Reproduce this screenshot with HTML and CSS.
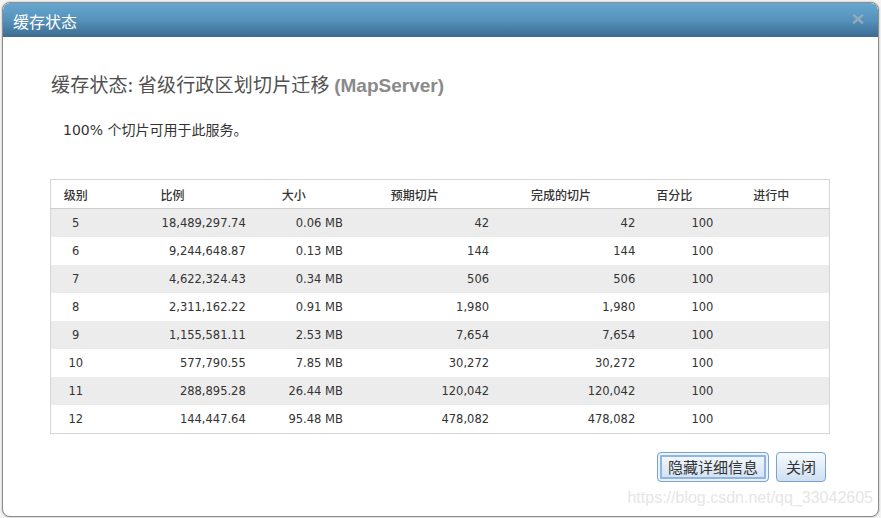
FILE: index.html
```html
<!DOCTYPE html>
<html lang="zh-CN">
<head>
<meta charset="utf-8">
<title>缓存状态</title>
<link rel="stylesheet" href="styles.css">
</head>
<body>
<div class="dialog">
  <div class="titlebar">
    <span class="title">缓存状态</span>
    <span class="close"><svg width="12" height="10" viewBox="0 0 12 10"><path d="M2 1.5 L10 8.5 M10 1.5 L2 8.5" stroke="#93a9bd" stroke-width="2.4" stroke-linecap="square"/></svg></span>
  </div>
  <div class="content">
    <h1 class="heading">缓存状态: 省级行政区划切片迁移 <span class="svc">(MapServer)</span></h1>
    <p class="msg">100% 个切片可用于此服务。</p>
    <table class="grid">
      <colgroup>
        <col class="w1"><col class="w2"><col class="w3"><col class="w4"><col class="w5"><col class="w6"><col class="w7">
      </colgroup>
      <thead>
        <tr>
          <th class="c1">级别</th><th class="c2">比例</th><th class="c3">大小</th><th class="c4">预期切片</th><th class="c5">完成的切片</th><th class="c6">百分比</th><th class="c7">进行中</th>
        </tr>
      </thead>
      <tbody>
        <tr class="odd"><td class="c1">5</td><td class="num">18,489,297.74</td><td class="num">0.06 MB</td><td class="num">42</td><td class="num">42</td><td class="num">100</td><td></td></tr>
        <tr><td class="c1">6</td><td class="num">9,244,648.87</td><td class="num">0.13 MB</td><td class="num">144</td><td class="num">144</td><td class="num">100</td><td></td></tr>
        <tr class="odd"><td class="c1">7</td><td class="num">4,622,324.43</td><td class="num">0.34 MB</td><td class="num">506</td><td class="num">506</td><td class="num">100</td><td></td></tr>
        <tr><td class="c1">8</td><td class="num">2,311,162.22</td><td class="num">0.91 MB</td><td class="num">1,980</td><td class="num">1,980</td><td class="num">100</td><td></td></tr>
        <tr class="odd"><td class="c1">9</td><td class="num">1,155,581.11</td><td class="num">2.53 MB</td><td class="num">7,654</td><td class="num">7,654</td><td class="num">100</td><td></td></tr>
        <tr><td class="c1">10</td><td class="num">577,790.55</td><td class="num">7.85 MB</td><td class="num">30,272</td><td class="num">30,272</td><td class="num">100</td><td></td></tr>
        <tr class="odd"><td class="c1">11</td><td class="num">288,895.28</td><td class="num">26.44 MB</td><td class="num">120,042</td><td class="num">120,042</td><td class="num">100</td><td></td></tr>
        <tr><td class="c1">12</td><td class="num">144,447.64</td><td class="num">95.48 MB</td><td class="num">478,082</td><td class="num">478,082</td><td class="num">100</td><td></td></tr>
      </tbody>
    </table>
    <div class="actions">
      <button class="btn focused">隐藏详细信息</button>
      <button class="btn">关闭</button>
    </div>
  </div>
  <div class="watermark">https://blog.csdn.net/qq_33042605</div>
</div>
</body>
</html>
```

FILE: styles.css
```css
html, body {
  margin: 0;
  padding: 0;
  background: #f4f4f4;
}
body {
  width: 881px;
  height: 518px;
  overflow: hidden;
  padding: 2px 0 0 2px;
  box-sizing: border-box;
}
.dialog {
  position: relative;
  width: 877px;
  height: 515px;
  box-sizing: border-box;
  border: 1px solid #8d8d8d;
  border-radius: 8px;
  background: #fff;
  box-shadow: 0 0 2px rgba(0,0,0,0.35);
  overflow: hidden;
}
.titlebar {
  height: 34px;
  background: linear-gradient(to bottom, #66a7cf 0%, #5592bb 50%, #3c6c91 100%);
  display: flex;
  align-items: center;
  justify-content: space-between;
  padding: 0 14px 0 10px;
  border-radius: 7px 7px 0 0;
}
.title {
  color: #fff;
  font-family: "Noto Sans CJK SC", sans-serif;
  font-size: 16px;
  line-height: 20px;
  margin-top: 1px;
}
.close {
  display: flex;
  margin-top: -3px;
}
.content {
  padding: 35px 48px 0 47px;
}
.heading {
  margin: 0 0 0 1px;
  font-family: "Noto Sans CJK SC", sans-serif;
  font-weight: normal;
  font-size: 19px;
  line-height: 24px;
  color: #505050;
  letter-spacing: 0.2px;
}
.svc {
  font-family: "Liberation Sans", "Noto Sans CJK SC", sans-serif;
  font-weight: bold;
  color: #8a8a8a;
  letter-spacing: 0;
}
.msg {
  margin: 22px 0 0 13px;
  font-family: "DejaVu Sans", "Noto Sans CJK SC", sans-serif;
  font-size: 14px;
  line-height: 20px;
  color: #333;
}
.grid {
  margin-top: 39px;
  width: 780px;
  border-collapse: collapse;
  table-layout: fixed;
  border: 1px solid #d6d6d6;
  font-family: "DejaVu Sans", "Noto Sans CJK SC", sans-serif;
  font-size: 11.5px;
  color: #333;
}
.w1 { width: 50px; }
.w2 { width: 155px; }
.w3 { width: 97px; }
.w4 { width: 146px; }
.w5 { width: 146px; }
.w6 { width: 78px; }
.w7 { width: 106px; }
.grid th {
  height: 28px;
  padding: 0;
  text-align: left;
  font-family: "Noto Sans CJK SC", sans-serif;
  font-size: 12px;
  font-weight: 500;
  color: #333;
  border-bottom: 1px solid #cfcfcf;
}
.grid th.c1 { text-align: center; }
.grid th.c2 { padding-left: 60px; }
.grid th.c3 { padding-left: 26px; }
.grid th.c4 { padding-left: 38px; }
.grid th.c5 { padding-left: 32px; }
.grid th.c6 { padding-left: 11px; }
.grid th.c7 { padding-left: 30px; }
.grid td {
  height: 28px;
  padding: 0;
}
.grid td.c1 { text-align: center; }
.grid td.num {
  text-align: right;
  padding-right: 10px;
}
.grid tr.odd td { background: #ececec; }
.actions {
  display: flex;
  justify-content: flex-end;
  gap: 7px;
  margin-top: 18px;
  margin-right: 4px;
}
.btn {
  height: 30px;
  padding: 0 9px;
  border: 1px solid #7aa3cf;
  border-radius: 4px;
  background: linear-gradient(to bottom, #f7fafd 0%, #e3edf8 50%, #cddff2 100%);
  font-family: "Noto Sans CJK SC", sans-serif;
  font-size: 15px;
  color: #333;
  line-height: 20px;
}
.btn.focused {
  padding: 0 10px;
  box-shadow: inset 0 0 0 2px #eaf2fb, inset 0 0 0 4px #8eb5e6;
}
.watermark {
  position: absolute;
  right: 5px;
  bottom: 9px;
  font-family: "Liberation Sans", sans-serif;
  font-size: 16px;
  color: #e6e6e6;
}
```
